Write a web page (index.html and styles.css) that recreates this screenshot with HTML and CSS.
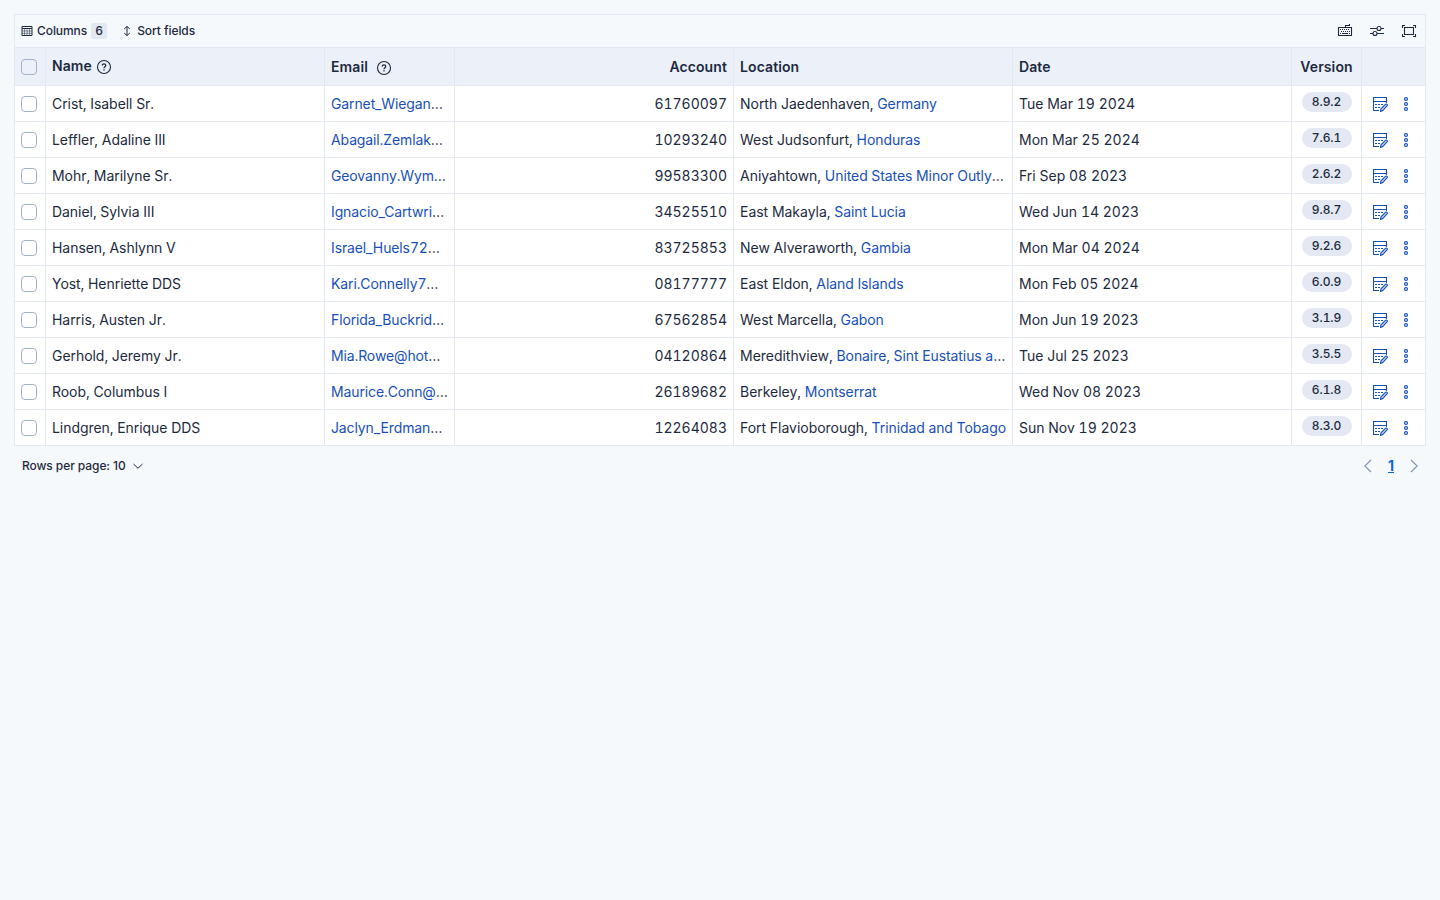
FILE: index.html
```
<!DOCTYPE html>
<html lang="en">
<head>
    <meta charset="utf-8">
    <title>Data grid</title>
    <link rel="stylesheet" href="styles.css">
</head>
<body>
    <!-- icons -->
    <svg class="sprite" width="0" height="0">
        <symbol id="i-table" viewBox="0 0 12 12">
            <path d="M1 1.5h10v9H1zM1 3.5h10"/>
            <path class="faint" d="M1 6h10M1 8.3h10M3.5 4v6M6 4v6M8.5 4v6"/>
        </symbol>
        <symbol id="i-sort" viewBox="0 0 12 12">
            <path d="M6 1.5v9M3.2 4L6 1.4 8.8 4M3.2 8L6 10.6 8.8 8"/>
        </symbol>
        <symbol id="i-keyboard" viewBox="0 0 16 16">
            <path d="M1.5 4.5h13v8h-13zM8.5 4.5v-2h4V1"/>
            <path class="dots" d="M3 6.5h10M4 8.5h9"/>
            <path d="M3 10.5h1M5 10.5h6M12 10.5h1"/>
        </symbol>
        <symbol id="i-controls" viewBox="0 0 16 16">
            <path d="M1 5.5h7M12 5.5h3M1 10.5h3M8 10.5h7"/>
            <circle cx="10" cy="5.5" r="2"/>
            <circle cx="6" cy="10.5" r="2"/>
        </symbol>
        <symbol id="i-full" viewBox="0 0 16 16">
            <path d="M3.5 4.5h9v7h-9zM1.5 5V2.5H4M12 2.5h2.5V5M14.5 11v2.5H12M4 13.5H1.5V11"/>
        </symbol>
        <symbol id="i-help" viewBox="0 0 16 16">
            <circle cx="8" cy="8" r="6.5"/>
            <path class="mark" d="M6.3 6.5c0-1 .7-1.7 1.7-1.7s1.7.7 1.7 1.6c0 1.3-1.7 1.4-1.7 2.8M8 10.2v1.3"/>
        </symbol>
        <symbol id="i-edit" viewBox="0 0 16 16">
            <path d="M7 14.5H1.5v-13h13V7M1.5 5.5h13"/>
            <path d="M3 8.5h2M6 8.5h2M9 8.5h2M3 11.5h2M6 11.5h2"/>
            <path class="pen" d="M8.5 15.5l.5-2.7 4.4-4.4c.5-.5 1.1-.5 1.6 0s.5 1.1 0 1.6L10.8 14.6z"/>
        </symbol>
        <symbol id="i-more" viewBox="0 0 16 16">
            <circle class="pen" cx="8" cy="3" r="1.5"/>
            <circle class="pen" cx="8" cy="8" r="1.5"/>
            <circle class="pen" cx="8" cy="13" r="1.5"/>
        </symbol>
        <symbol id="i-down" viewBox="0 0 12 12">
            <path d="M1.5 4L6 8.2 10.5 4"/>
        </symbol>
        <symbol id="i-left" viewBox="0 0 16 16">
            <path d="M11 2L4.8 8l6.2 6"/>
        </symbol>
        <symbol id="i-right" viewBox="0 0 16 16">
            <path d="M5 2l6.2 6L5 14"/>
        </symbol>
    </svg>

    <div class="grid">
        <div class="toolbar">
            <button class="tool"><svg class="icon small"><use href="#i-table"/></svg>Columns <span class="count">6</span></button>
            <button class="tool"><svg class="icon small"><use href="#i-sort"/></svg>Sort fields</button>
            <div class="tools-right">
                <button><svg class="icon"><use href="#i-keyboard"/></svg></button>
                <button><svg class="icon"><use href="#i-controls"/></svg></button>
                <button><svg class="icon"><use href="#i-full"/></svg></button>
            </div>
        </div>
        <div class="row header">
            <div class="cell"><input type="checkbox"></div>
            <div class="cell name"><span>Name</span><svg class="icon"><use href="#i-help"/></svg></div>
            <div class="cell email"><span>Email</span><svg class="icon"><use href="#i-help"/></svg></div>
            <div class="cell num">Account</div>
            <div class="cell">Location</div>
            <div class="cell">Date</div>
            <div class="cell version">Version</div>
            <div class="cell"></div>
        </div>
        <div id="rows"></div>
    </div>
    <div class="footer">
        <button class="per-page">Rows per page: 10<svg class="icon small"><use href="#i-down"/></svg></button>
        <div class="pages">
            <svg class="icon"><use href="#i-left"/></svg>
            <a href="#">1</a>
            <svg class="icon"><use href="#i-right"/></svg>
        </div>
    </div>

    <script>
    var data = [
        ["Crist, Isabell Sr.", "Garnet_Wiegand@hotmail.com", "61760097", "North Jaedenhaven", "Germany", "Tue Mar 19 2024", "8.9.2"],
        ["Leffler, Adaline III", "Abagail.Zemlak@gmail.com", "10293240", "West Judsonfurt", "Honduras", "Mon Mar 25 2024", "7.6.1"],
        ["Mohr, Marilyne Sr.", "Geovanny.Wyman@gmail.com", "99583300", "Aniyahtown", "United States Minor Outlying Islands", "Fri Sep 08 2023", "2.6.2"],
        ["Daniel, Sylvia III", "Ignacio_Cartwright@yahoo.com", "34525510", "East Makayla", "Saint Lucia", "Wed Jun 14 2023", "9.8.7"],
        ["Hansen, Ashlynn V", "Israel_Huels72@gmail.com", "83725853", "New Alveraworth", "Gambia", "Mon Mar 04 2024", "9.2.6"],
        ["Yost, Henriette DDS", "Kari.Connelly7@hotmail.com", "08177777", "East Eldon", "Aland Islands", "Mon Feb 05 2024", "6.0.9"],
        ["Harris, Austen Jr.", "Florida_Buckridge@gmail.com", "67562854", "West Marcella", "Gabon", "Mon Jun 19 2023", "3.1.9"],
        ["Gerhold, Jeremy Jr.", "Mia.Rowe@hotmail.com", "04120864", "Meredithview", "Bonaire, Sint Eustatius and Saba", "Tue Jul 25 2023", "3.5.5"],
        ["Roob, Columbus I", "Maurice.Conn@gmail.com", "26189682", "Berkeley", "Montserrat", "Wed Nov 08 2023", "6.1.8"],
        ["Lindgren, Enrique DDS", "Jaclyn_Erdman@yahoo.com", "12264083", "Fort Flavioborough", "Trinidad and Tobago", "Sun Nov 19 2023", "8.3.0"]
    ];

    var html = "";
    data.forEach(function (d) {
        html += '<div class="row">' +
            '<div class="cell"><input type="checkbox"></div>' +
            '<div class="cell">' + d[0] + '</div>' +
            '<div class="cell"><a href="#">' + d[1] + '</a></div>' +
            '<div class="cell num">' + d[2] + '</div>' +
            '<div class="cell location">' + d[3] + ', <a href="#">' + d[4] + '</a></div>' +
            '<div class="cell date">' + d[5] + '</div>' +
            '<div class="cell version"><span class="badge">' + d[6] + '</span></div>' +
            '<div class="cell actions"><svg class="icon"><use href="#i-edit"/></svg><svg class="icon"><use href="#i-more"/></svg></div>' +
            '</div>';
    });
    document.getElementById("rows").innerHTML = html;
    </script>
</body>
</html>
```
FILE: styles.css
```
* {
    box-sizing: border-box;
}
body {
    margin: 0;
    padding: 14px;
    background: #f6f9fc;
    color: #1d2a3e;
    font: 14px/24px Inter, sans-serif;
}
a {
    color: #1750ba;
    text-decoration: none;
}
button {
    display: flex;
    align-items: center;
    padding: 0;
    border: 0;
    background: none;
    color: inherit;
    font: inherit;
    letter-spacing: inherit;
}
.sprite {
    display: block;
}
.icon {
    flex: none;
    width: 16px;
    height: 16px;
    fill: none;
    stroke: currentColor;
    stroke-width: 1.1;
}
.icon.small {
    width: 12px;
    height: 12px;
    stroke-width: 1;
}
.dots {
    stroke-dasharray: 1 1;
}
.faint {
    opacity: 0.5;
}
.mark {
    stroke-width: 1.3;
}
.pen {
    fill: #c3d4f0;
}

.grid {
    border: 1px solid #e3e8f2;
    border-bottom: 0;
    font-variant-numeric: tabular-nums;
}
.toolbar {
    display: flex;
    align-items: center;
    gap: 14px;
    height: 33px;
    padding: 0 8px 0 6px;
    border-bottom: 1px solid #e3e8f2;
    font-size: 12px;
    font-weight: 500;
    letter-spacing: -0.07px;
}
.tool {
    gap: 4px;
}
.count {
    min-width: 16px;
    height: 16px;
    border-radius: 2px;
    background: #e3e8f2;
    line-height: 16px;
    text-align: center;
}
.tools-right {
    display: flex;
    gap: 16px;
    margin-left: auto;
}

.row {
    display: grid;
    grid-template-columns: 31px 279px 130px 279px 279px 279px 70px 1fr;
    height: 36px;
    border-bottom: 1px solid #e3e8f2;
    background: #fff;
    letter-spacing: -0.05px;
}
.row a {
    letter-spacing: -0.12px;
}
.cell {
    min-width: 0;
    padding: 6px;
    border-right: 1px solid #e3e8f2;
    overflow: hidden;
    text-overflow: ellipsis;
    white-space: nowrap;
}
.cell:last-child {
    border-right: 0;
}
.header {
    height: 38px;
    background: #ecf1f9;
    font-weight: 600;
    letter-spacing: 0.1px;
}
.header .cell {
    padding-top: 7px;
}
.header .name,
.header .email {
    display: flex;
    align-items: center;
    gap: 4px;
    padding: 1px 6px 0;
}
.header .name span {
    margin-top: -2px;
}
.header .email {
    gap: 8px;
}
.header .email .icon {
    margin-top: 2px;
}
.location {
    letter-spacing: -0.02px;
}
.row .location a {
    letter-spacing: -0.08px;
}
.num,
.date {
    letter-spacing: 0;
}
.num {
    text-align: right;
}
.header .num {
    letter-spacing: 0.1px;
}
.version {
    text-align: center;
}
.badge {
    display: block;
    width: 50px;
    height: 20px;
    margin: 0 auto;
    border-radius: 10px;
    background: #e3e8f2;
    font-size: 12px;
    font-weight: 500;
    line-height: 20px;
}
.actions {
    display: flex;
    align-items: center;
    gap: 10px;
    padding: 0 0 0 10px;
    color: #1750ba;
}
input[type="checkbox"] {
    display: block;
    appearance: none;
    width: 16px;
    height: 16px;
    margin: 4px 0;
    border: 1px solid #a2b1cc;
    border-radius: 4px;
}

.footer {
    display: flex;
    align-items: center;
    justify-content: space-between;
    height: 40px;
    padding: 0 4px 0 8px;
}
.per-page {
    gap: 6px;
    font-size: 12px;
    font-weight: 500;
    letter-spacing: -0.08px;
}
.pages {
    display: flex;
    align-items: center;
    gap: 12px;
    color: #8291ad;
}
.pages a {
    color: #0b64dd;
    font-weight: 700;
    text-decoration: underline;
}
```
